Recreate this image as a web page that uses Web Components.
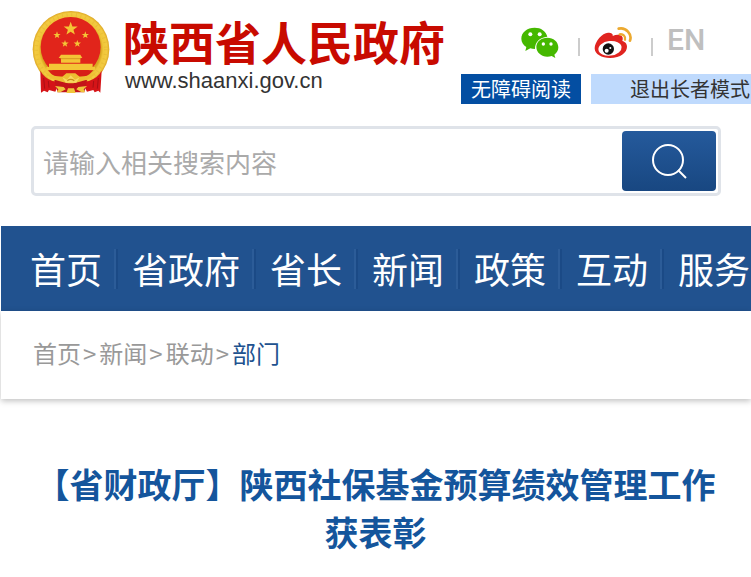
<!DOCTYPE html>
<html lang="zh-CN">
<head>
<meta charset="utf-8">
<title>陕西省人民政府</title>
<style>
  body {
    margin: 0;
    overflow-x: hidden;
    background: #fff;
    font-family: "Noto Sans CJK SC", sans-serif;
  }
</style>
</head>
<body>
<site-header></site-header>
<site-search placeholder="请输入相关搜索内容"></site-search>
<site-nav>
  <nav-item>首页</nav-item>
  <nav-item>省政府</nav-item>
  <nav-item>省长</nav-item>
  <nav-item>新闻</nav-item>
  <nav-item>政策</nav-item>
  <nav-item>互动</nav-item>
  <nav-item>服务</nav-item>
</site-nav>
<bread-crumb path="首页,新闻,联动,部门"></bread-crumb>
<article-title>【省财政厅】陕西社保基金预算绩效管理工作获表彰</article-title>

<script>
// attach an open shadow root filled from a template
function render(el, html) {
  const template = document.createElement('template');
  template.innerHTML = html;
  el.attachShadow({ mode: 'open' }).appendChild(template.content.cloneNode(true));
}

class StateEmblem extends HTMLElement {
  constructor() {
    super();
    render(this, `
<style>
  :host { display: block; flex: none; }
  svg { display: block; }
</style>
<svg width="78" height="84" viewBox="37 33 234 252" aria-hidden="true">
  <defs>
    <radialGradient id="gold" cx="50%" cy="50%" r="50%">
      <stop offset="0.78" stop-color="#d9a520"/>
      <stop offset="0.84" stop-color="#f0c63a"/>
      <stop offset="0.94" stop-color="#f3cb41"/>
      <stop offset="1" stop-color="#dca522"/>
    </radialGradient>
    <path id="star" d="M0-20L5-6L20-6L8 3L12 17L0 9L-12 17L-8 3L-20-6L-5-6Z"/>
  </defs>
  <circle cx="154" cy="148" r="115" fill="url(#gold)"/>
  <circle cx="153" cy="141" r="90" fill="#e1251b"/>
  <circle cx="154" cy="148" r="104" fill="none" stroke="#c88b18" stroke-width="10" stroke-dasharray="3 11" opacity="0.18"/>
  <g fill="#f4c536">
    <use href="#star" transform="translate(153 86) scale(1.050)"/>
    <use href="#star" transform="translate(112 105) scale(.55)"/>
    <use href="#star" transform="translate(197 105) scale(.55)"/>
    <use href="#star" transform="translate(136 131) scale(.55)"/>
    <use href="#star" transform="translate(173 131) scale(.55)"/>
    <path d="M124 164H182L188 174H182V188H124V174H117Z"/>
    <path d="M88 191H219V201H226V210H80V201H88Z"/>
  </g>
  <path d="M121 176H184" stroke="#c98818" stroke-width="2"/>
  <path d="M85 211H221Q210 224 198 230H108Q94 224 85 211Z" fill="#d71e17"/>
  <path d="M62 212Q72 232 98 243L120 246L107 275L88 270L84 277L73 272L64 278Z" fill="#d51418"/>
  <path d="M246 212Q236 232 208 243L186 246L202 275L221 270L225 277L236 272L242 278Z" fill="#d51418"/>
  <path d="M72 234L75 266M86 243L88 263M236 234L233 266M222 243L220 263" stroke="#a80f14" stroke-width="3"/>
  <path d="M104 240H202L194 277H114Z" fill="#c31519"/>
  <path d="M76 216Q96 230 128 230L140 220H167L180 230Q208 230 230 216Q216 238 188 243Q166 250 153 250Q140 250 118 243Q90 238 76 216Z" fill="#edbf32"/>
  <path d="M106 258L132 261L138 268L122 277H112L116 268ZM202 258L176 261L170 268L186 277H196L192 268ZM145 265H163L168 279H140Z" fill="#f0c63c"/>
  <path d="M128 232L142 239L153 226L166 239L180 232L170 248H138Z" fill="#f8d860"/>
  <path d="M143 242Q153 234 164 242" fill="none" stroke="#c98e17" stroke-width="4"/>
</svg>`);
  }
}

class SiteHeader extends HTMLElement {
  constructor() {
    super();
    render(this, `
<style>
  :host {
    display: flex;
    align-items: flex-start;
    padding: 11px 0 0 32px;
    overflow: hidden;
  }
  a { color: inherit; text-decoration: none; }
  .brand {
    display: flex;
    flex: none;
    gap: 13px;
  }
  .name {
    margin: 0;
    color: #c80a00;
    font-size: 46px;
    font-weight: 700;
    line-height: 58px;
  }
  .domain {
    margin: 0 0 0 2px;
    color: #333;
    font: 22px/24px "Liberation Sans", sans-serif;
  }
  .tools {
    flex: none;
    margin-left: 16px;
    padding-top: 11px;
  }
  .links {
    display: flex;
    align-items: center;
    gap: 14px;
    height: 42px;
    margin: 0 0 10px 60px;
  }
  .links svg { display: block; }
  .bar {
    width: 2px;
    height: 18px;
    margin: 8px 0 0 5px;
    background: #ccc;
  }
  .en {
    align-self: flex-start;
    color: #bfbfbf;
    font: 500 30px/36px Roboto, sans-serif;
  }
  .modes { display: flex; gap: 10px; }
  button {
    height: 30px;
    padding: 0 10px;
    border: 0;
    background: #034ea2;
    color: #fff;
    font: 20px/30px "Noto Sans CJK SC", sans-serif;
    white-space: nowrap;
    cursor: pointer;
  }
  button.exit {
    padding: 0 39px;
    background: #bfdafd;
    color: #333;
  }
</style>
<a class="brand" href="#">
  <state-emblem></state-emblem>
  <div>
    <h1 class="name">陕西省人民政府</h1>
    <p class="domain">www.shaanxi.gov.cn</p>
  </div>
</a>
<div class="tools">
  <div class="links">
    <a href="#" aria-label="微信">
      <svg width="38" height="32" viewBox="0 0 114 96">
        <path d="M41 2C18 2 1 16 1 35c0 11 6 19 15 25l-3 12 15-8q6 2 14 2C42 44 56 31 79 29 75 12 60 2 41 2Z" fill="#45b800"/>
        <path d="M79 32C60 32 46 44 46 60s15 29 33 29q7 0 13-2l11 6-3-10c8-6 12-13 12-22 0-17-15-29-33-29Z" fill="#45b800"/>
        <g fill="#fff"><circle cx="28" cy="22" r="6"/><circle cx="56" cy="22" r="6"/><circle cx="67" cy="51" r="5"/><circle cx="90" cy="51" r="5"/></g>
      </svg>
    </a>
    <span class="bar"></span>
    <a href="#" aria-label="微博">
      <svg width="38" height="32" viewBox="0 0 114 96">
        <path d="M42 17C25 17 2 44 2 64c0 18 21 29 46 29 32 0 51-17 51-34 0-10-7-15-14-17 3-8 1-15-6-17-7-3-15-1-23 2 2-6-3-10-14-10Z" fill="#e02420"/>
        <ellipse cx="48" cy="64" rx="35" ry="22" fill="#fff" transform="rotate(-7 48 64)"/>
        <circle cx="43" cy="66" r="17" fill="#111"/>
        <circle cx="38" cy="71" r="6" fill="#fff"/>
        <circle cx="49" cy="63" r="3" fill="#fff"/>
        <g fill="none" stroke="#eca92f" stroke-linecap="round">
          <path d="M74 5c22-5 41 16 34 36" stroke-width="8"/>
          <path d="M77 22c11-2 18 6 16 16" stroke-width="7"/>
        </g>
      </svg>
    </a>
    <span class="bar"></span>
    <a class="en" href="#">EN</a>
  </div>
  <div class="modes">
    <button type="button">无障碍阅读</button>
    <button type="button" class="exit">退出长者模式</button>
  </div>
</div>`);
  }
}

class SiteSearch extends HTMLElement {
  constructor() {
    super();
    render(this, `
<style>
  :host { display: block; padding: 22px 30px 30px 31px; }
  form {
    display: flex;
    height: 60px;
    padding: 2px;
    border: 3px solid #dfe3e9;
    border-radius: 5px;
  }
  input {
    flex: 1;
    min-width: 0;
    padding: 0 7px;
    border: 0;
    outline: 0;
    background: none;
    color: #333;
    font: 26px "Noto Sans CJK SC", sans-serif;
  }
  input::placeholder { color: #aaa; opacity: 1; }
  button {
    display: grid;
    place-items: center;
    width: 94px;
    padding: 0;
    border: 0;
    border-radius: 4px;
    background: linear-gradient(#255a9c, #184781);
    cursor: pointer;
  }
</style>
<form role="search">
  <input type="search" aria-label="搜索">
  <button type="submit" aria-label="搜索">
    <svg width="36" height="36" viewBox="0 0 36 36" fill="none" stroke="#fff" stroke-width="2">
      <circle cx="17" cy="17" r="15"/>
      <path d="M27 27L35 35"/>
    </svg>
  </button>
</form>`);
    this.shadowRoot.querySelector('input').placeholder = this.getAttribute('placeholder');
    this.shadowRoot.querySelector('form').addEventListener('submit', e => e.preventDefault());
  }
}

class SiteNav extends HTMLElement {
  constructor() {
    super();
    render(this, `
<style>
  :host { display: block; margin-left: 1px; background: #21528f; overflow: hidden; }
  nav { display: flex; align-items: center; height: 85px; padding-left: 29px; }
</style>
<nav><slot></slot></nav>`);
  }
}

class NavItem extends HTMLElement {
  constructor() {
    super();
    render(this, `
<style>
  :host { display: flex; flex: none; align-items: center; }
  a {
    padding-bottom: 2px;
    color: #fff;
    font-size: 36px;
    line-height: 54px;
    text-decoration: none;
    white-space: nowrap;
  }
  i {
    width: 2px;
    height: 40px;
    margin: 0 14px 0 12px;
    border-right: 2px solid #1b4a86;
    background: #2c5c98;
  }
  :host(:last-child) i { display: none; }
</style>
<a href="#"><slot></slot></a><i></i>`);
  }
}

class BreadCrumb extends HTMLElement {
  constructor() {
    super();
    const items = this.getAttribute('path').split(',');
    render(this, `
<style>
  :host {
    display: block;
    margin-left: 1px;
    box-shadow: 0 2px 6px rgba(0, 0, 0, .25);
  }
  nav {
    display: flex;
    padding: 24px 32px 28px;
    color: #999;
    font-size: 24px;
    line-height: 36px;
  }
  a { color: inherit; text-decoration: none; }
  a:last-child { color: #21528f; }
  span { padding: 0 3px 0 2px; }
</style>
<nav aria-label="当前位置">${items.map(t => `<a href="#">${t}</a>`).join('<span>&gt;</span>')}</nav>`);
  }
}

class ArticleTitle extends HTMLElement {
  constructor() {
    super();
    render(this, `
<style>
  :host { display: block; padding: 61px 30px 18px; }
  h2 {
    margin: 0;
    color: #14559c;
    font-size: 34px;
    font-weight: 700;
    line-height: 48px;
    text-align: center;
  }
</style>
<h2><slot></slot></h2>`);
  }
}

customElements.define('state-emblem', StateEmblem);
customElements.define('site-header', SiteHeader);
customElements.define('site-search', SiteSearch);
customElements.define('nav-item', NavItem);
customElements.define('site-nav', SiteNav);
customElements.define('bread-crumb', BreadCrumb);
customElements.define('article-title', ArticleTitle);
</script>
</body>
</html>
